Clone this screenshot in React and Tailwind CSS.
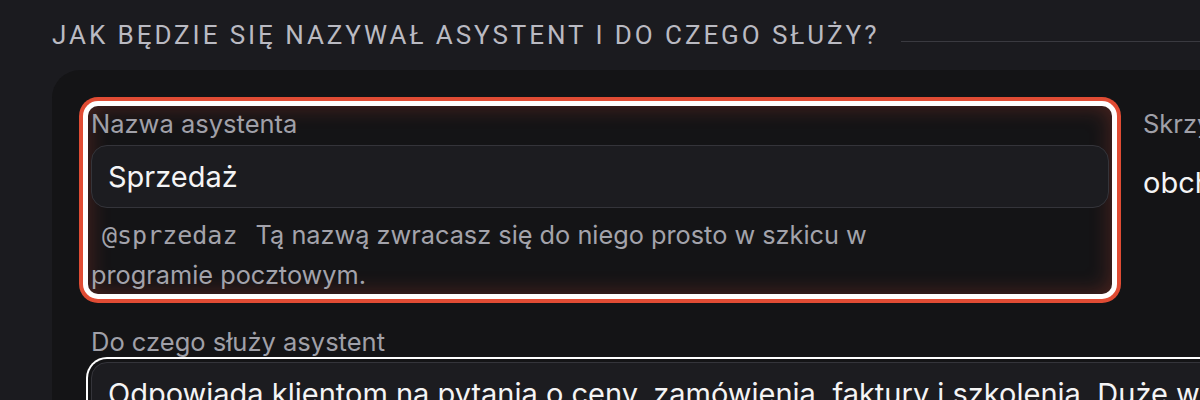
import React from "react";

const sans = { fontFamily: "Inter, 'Noto Sans', sans-serif" };
const mono = { fontFamily: "'DejaVu Sans Mono', 'Liberation Mono', monospace" };

export default function App() {
  return (
    <div className="min-h-screen w-full overflow-hidden bg-[#1b1b1f] pl-[52px]" style={sans}>
      {/* Section heading */}
      <div className="flex w-[1200px] items-end gap-[22px] pt-[20px]">
        <h2
          className="whitespace-nowrap text-[26px] leading-[30px] uppercase tracking-[0.113em] text-[#babac2]"
          style={{ fontFamily: "Roboto, 'Liberation Sans', sans-serif" }}
        >
          Jak będzie się nazywał asystent i do czego służy?
        </h2>
        <div className="mb-[8px] h-px flex-1 bg-[#3a3a40]" />
      </div>

      {/* Card */}
      <div className="mt-[20px] w-[1500px] rounded-tl-[28px] bg-[#141416] p-[36px]">
        <div className="grid grid-cols-[1024px_1fr] gap-x-[31px] gap-y-[30px]">
          {/* Focused field */}
          <div className="rounded-[10px] bg-[#141416] px-[3px] shadow-[inset_0_0_22px_rgba(224,76,52,0.3),0_0_0_5px_#ffffff,0_0_0_9px_#e04c34]">
            <label className="block text-[25.5px] leading-[36px] text-[#a0a0a8]">Nazwa asystenta</label>
            <div className="mt-[3px] flex h-[63px] items-center rounded-[16px] border border-[#34343a] bg-[#1c1c20] px-[16px]">
              <span className="text-[29px] text-[#f4f4f5]">Sprzedaż</span>
            </div>
            <p className="mt-[7px] max-w-[792px] text-[25.3px] leading-[39px] text-[#a3a3ab]">
              <code className="px-[11px] text-[25px] text-[#a3a3ab]" style={mono}>
                @sprzedaz
              </code>{" "}
              Tą nazwą zwracasz się do niego prosto w szkicu w programie pocztowym.
            </p>
          </div>

          {/* Right field, cut off by the window */}
          <div className="whitespace-nowrap">
            <label className="block text-[25.5px] leading-[36px] text-[#a0a0a8]">Skrzynka odbiorcza</label>
            <div className="flex h-[63px] items-center pt-[18px]">
              <span className="text-[29px] text-[#f4f4f5]">obchodzi wszystkie</span>
            </div>
          </div>

          {/* Purpose field */}
          <div className="col-span-2 px-[3px]">
            <label className="block text-[25.5px] leading-[36px] text-[#a0a0a8]">Do czego służy asystent</label>
            <div className="mt-[2px] rounded-[16px] border border-[#34343a] bg-[#1c1c20] px-[16px] py-[9px] shadow-[0_0_0_3px_#141416,0_0_0_5px_#ffffff]">
              <p className="whitespace-nowrap text-[29px] leading-[43px] text-[#f4f4f5]">
                Odpowiada klientom na pytania o ceny, zamówienia, faktury i szkolenia. Duże wdrożenia przekazuje dalej.
              </p>
              <p className="text-[29px] leading-[43px] text-[#f4f4f5]">&nbsp;</p>
            </div>
          </div>
        </div>
      </div>
    </div>
  );
}
